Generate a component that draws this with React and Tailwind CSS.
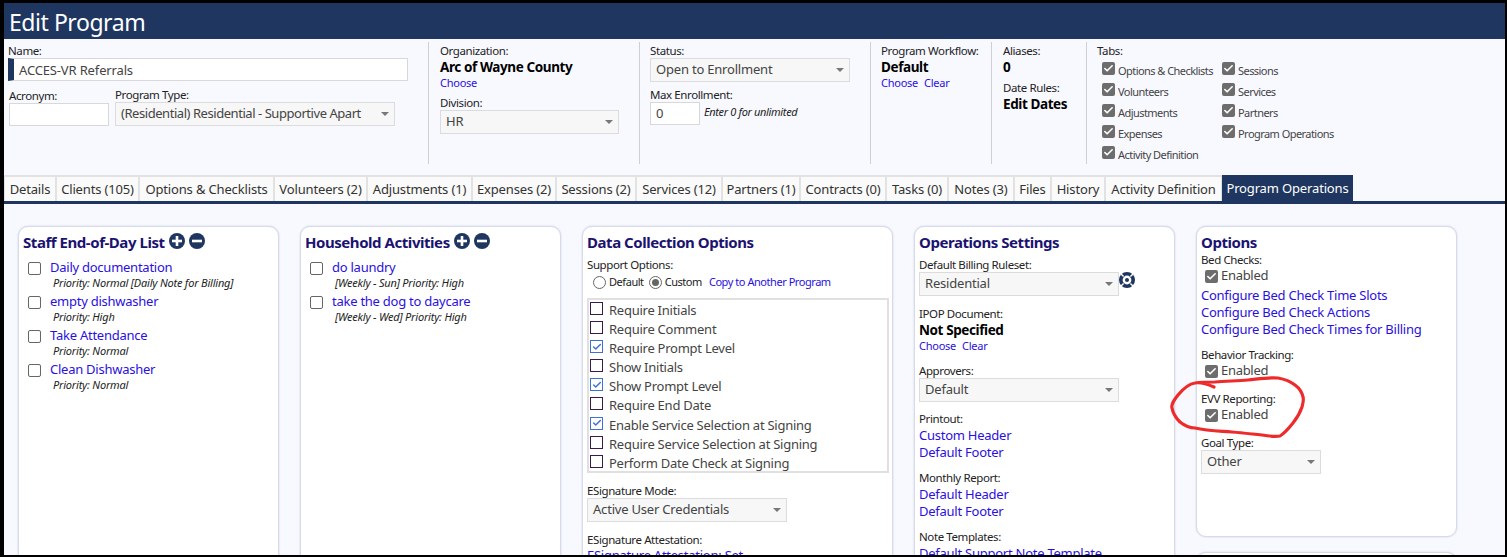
import { Check } from "lucide-react";

const tabs = [
  { label: "Details", width: "w-[52px]" },
  { label: "Clients (105)", width: "w-[83px]" },
  { label: "Options & Checklists", width: "w-[135px]" },
  { label: "Volunteers (2)", width: "w-[93px]" },
  { label: "Adjustments (1)", width: "w-[105px]" },
  { label: "Expenses (2)", width: "w-[84px]" },
  { label: "Sessions (2)", width: "w-[80px]" },
  { label: "Services (12)", width: "w-[86px]" },
  { label: "Partners (1)", width: "w-[78px]" },
  { label: "Contracts (0)", width: "w-[86px]" },
  { label: "Tasks (0)", width: "w-[62px]" },
  { label: "Notes (3)", width: "w-[66px]" },
  { label: "Files", width: "w-[37px]" },
  { label: "History", width: "w-[54px]" },
  { label: "Activity Definition", width: "w-[117px]" },
];

const tabOptions = [
  ["Options & Checklists", "Volunteers", "Adjustments", "Expenses", "Activity Definition"],
  ["Sessions", "Services", "Partners", "Program Operations"],
];

const staffList = [
  { name: "Daily documentation", note: "Priority: Normal [Daily Note for Billing]" },
  { name: "empty dishwasher", note: "Priority: High" },
  { name: "Take Attendance", note: "Priority: Normal" },
  { name: "Clean Dishwasher", note: "Priority: Normal" },
];

const household = [
  { name: "do laundry", note: "[Weekly - Sun] Priority: High" },
  { name: "take the dog to daycare", note: "[Weekly - Wed] Priority: High" },
];

const supportOptions = [
  { label: "Require Initials", on: false },
  { label: "Require Comment", on: false },
  { label: "Require Prompt Level", on: true },
  { label: "Show Initials", on: false },
  { label: "Show Prompt Level", on: true },
  { label: "Require End Date", on: false },
  { label: "Enable Service Selection at Signing", on: true },
  { label: "Require Service Selection at Signing", on: false },
  { label: "Perform Date Check at Signing", on: false },
];

function Label({ children, className = "" }) {
  return <div className={`text-[11.5px] leading-[14px] tracking-[-0.4px] whitespace-nowrap text-[#222] ${className}`}>{children}</div>;
}

function Bold({ children }) {
  return <div className="text-[13.5px] leading-[18px] font-bold tracking-[-0.4px] text-black">{children}</div>;
}

function Link({ children, className = "" }) {
  return <a className={`tracking-[-0.25px] whitespace-nowrap text-[#2a10e0] ${className}`}>{children}</a>;
}

function Select({ value, className = "" }) {
  return (
    <div className={`flex h-[24px] items-center justify-between border border-[#dcdcdc] bg-[#f7f7f7] pl-[5px] pr-[5px] text-[13px] tracking-[-0.2px] whitespace-nowrap text-[#444] ${className}`}>
      <span>{value}</span>
      <span className="ml-1 h-0 w-0 shrink-0 border-x-[4px] border-t-[4px] border-x-transparent border-t-[#777]" />
    </div>
  );
}

function GrayBox() {
  return (
    <span className="flex h-[13px] w-[13px] shrink-0 items-center justify-center rounded-[2px] bg-[#6d6d6d]">
      <Check size={11} strokeWidth={3.5} className="text-white" />
    </span>
  );
}

function Enabled() {
  return (
    <div className="flex h-[18px] items-center gap-[3px] pl-[4px] text-[13px] tracking-[-0.3px] text-[#444]">
      <GrayBox />
      <span>Enabled</span>
    </div>
  );
}

function RoundIcon({ minus }) {
  return (
    <svg width="16" height="16" viewBox="0 0 16 16" className="shrink-0">
      <circle cx="8" cy="8" r="8" fill="#1f3660" />
      <rect x="3" y="6.7" width="10" height="2.6" fill="#fff" />
      {!minus && <rect x="6.7" y="3" width="2.6" height="10" fill="#fff" />}
    </svg>
  );
}

function GearIcon() {
  return (
    <svg width="16" height="16" viewBox="0 0 16 16" className="shrink-0">
      <circle cx="8" cy="8" r="8" fill="#1f3660" />
      <circle cx="8" cy="8" r="4.4" fill="#fff" />
      <circle cx="8" cy="8" r="2" fill="#1f3660" />
      <path d="M2 2 L4.6 4.6 M14 2 L11.4 4.6 M2 14 L4.6 11.4 M14 14 L11.4 11.4" stroke="#fff" strokeWidth="1.4" />
    </svg>
  );
}

function Divider() {
  return <div className="w-[1px] shrink-0 self-stretch bg-[#cfcfcf]" />;
}

function Card({ className = "", children }) {
  return (
    <div className={`shrink-0 overflow-hidden rounded-[10px] border border-[#d6daea] bg-white px-[4px] shadow-[0_0_2px_rgba(80,90,140,0.25)] ${className}`}>
      {children}
    </div>
  );
}

function CardTitle({ children, icons }) {
  return (
    <div className="flex items-start gap-[4px] pt-[6px]">
      <h3 className="text-[15px] leading-[19px] font-bold tracking-[-0.45px] text-[#1b1370]">{children}</h3>
      {icons && (
        <div className="flex gap-[4px]">
          <RoundIcon />
          <RoundIcon minus />
        </div>
      )}
    </div>
  );
}

function CheckList({ items }) {
  return (
    <div className="mt-[8px] flex flex-col">
      {items.map((item) => (
        <div key={item.name} className="flex h-[34px] pl-[5px]">
          <span className="mt-[2px] h-[13px] w-[13px] shrink-0 rounded-[2px] border border-[#666] bg-white" />
          <div className="ml-[9px]">
            <Link className="block text-[13px] leading-[15px]">{item.name}</Link>
            <div className="mt-[1px] pl-[3px] text-[11px] leading-[14px] tracking-[-0.2px] whitespace-nowrap text-[#222] italic">{item.note}</div>
          </div>
        </div>
      ))}
    </div>
  );
}

export default function App() {
  return (
    <div className="h-[557px] w-[1507px] overflow-hidden border-t-[3px] border-r-[2px] border-b-[2px] border-l-[4px] border-black bg-[#f8f9ff] font-['Noto_Sans',sans-serif] text-[#222]">
      <div className="relative h-full">
        <div className="flex h-[36px] items-center bg-[#1f3660] pt-[3px] pl-[5px]">
          <h1 className="text-[23px] tracking-[-0.45px] text-white">Edit Program</h1>
        </div>

        {/* Program header fields */}
        <div className="flex h-[136px] pt-[3px] pb-[11px]">
          <div className="w-[424px] shrink-0 pl-[4px]">
            <Label className="mt-[2px]">Name:</Label>
            <div className="flex h-[23px] w-[400px] items-center border border-[#d8d8d8] border-l-[6px] border-l-[#1f3660] bg-white pt-[2px] pl-[5px] text-[13px] tracking-[-0.15px] text-[#444]">
              ACCES-VR Referrals
            </div>
            <div className="mt-[7px] flex gap-[6px]">
              <div className="pl-[1px]">
                <Label className="mt-[1px]">Acronym:</Label>
                <div className="h-[23px] w-[100px] border border-[#d8d8d8] bg-white" />
              </div>
              <div>
                <Label>Program Type:</Label>
                <Select value="(Residential) Residential - Supportive Apart" className="w-[280px] tracking-[-0.45px]" />
              </div>
            </div>
          </div>
          <Divider />
          <div className="w-[210px] shrink-0 pl-[11px]">
            <Label className="mt-[2px]">Organization:</Label>
            <Bold>Arc of Wayne County</Bold>
            <Link className="block text-[11px] leading-[14px]">Choose</Link>
            <Label className="mt-[6px]">Division:</Label>
            <Select value="HR" className="w-[179px]" />
          </div>
          <Divider />
          <div className="w-[230px] shrink-0 pl-[10px]">
            <Label className="mt-[2px]">Status:</Label>
            <Select value="Open to Enrollment" className="w-[200px]" />
            <Label className="mt-[6px]">Max Enrollment:</Label>
            <div className="flex items-start gap-[4px]">
              <div className="flex h-[23px] w-[50px] items-center border border-[#d8d8d8] bg-white pl-[5px] text-[13px] text-[#444]">0</div>
              <div className="text-[11px] leading-[20px] tracking-[-0.35px] whitespace-nowrap text-[#222] italic">Enter 0 for unlimited</div>
            </div>
          </div>
          <Divider />
          <div className="w-[120px] shrink-0 pl-[10px]">
            <Label className="mt-[2px]">Program Workflow:</Label>
            <Bold>Default</Bold>
            <div className="flex gap-[6px] text-[11px] leading-[14px]">
              <Link>Choose</Link>
              <Link>Clear</Link>
            </div>
          </div>
          <Divider />
          <div className="w-[94px] shrink-0 pl-[11px]">
            <Label className="mt-[2px]">Aliases:</Label>
            <Bold>0</Bold>
            <Label className="mt-[5px]">Date Rules:</Label>
            <Bold>Edit Dates</Bold>
          </div>
          <Divider />
          <div className="pl-[10px]">
            <Label className="mt-[2px]">Tabs:</Label>
            <div className="flex gap-[6px] pl-[5px] text-[11px] leading-[16px] tracking-[-0.55px] whitespace-nowrap text-[#444]">
              {tabOptions.map((col, i) => (
                <div key={i} className={`flex flex-col ${i === 0 ? "w-[114px]" : ""}`}>
                  {col.map((t) => (
                    <div key={t} className="flex h-[21px] items-start gap-[3px] pt-[4px]">
                      <GrayBox />
                      <span className="mt-[1px]">{t}</span>
                    </div>
                  ))}
                </div>
              ))}
            </div>
          </div>
        </div>

        {/* Tab strip */}
        <div className="flex h-[26px]">
          {tabs.map((t) => (
            <div key={t.label} className={`flex items-center justify-center border-x border-t-2 border-[#e2e2e2] bg-[#fafafa] pt-[1px] text-[13px] tracking-[-0.15px] whitespace-nowrap text-[#333] ${t.width}`}>
              {t.label}
            </div>
          ))}
          <div className="flex w-[131px] items-center justify-center bg-[#1f3660] pt-[1px] text-[13px] tracking-[-0.15px] whitespace-nowrap text-white">Program Operations</div>
        </div>
        <div className="h-[3px] bg-[#1f3660]" />

        {/* Cards */}
        <div className="flex items-start gap-[21px] pt-[22px] pl-[14px]">
          <Card className="h-[340px] w-[261px]">
            <CardTitle icons>Staff End-of-Day List</CardTitle>
            <CheckList items={staffList} />
          </Card>
          <Card className="h-[340px] w-[261px]">
            <CardTitle icons>Household Activities</CardTitle>
            <CheckList items={household} />
          </Card>
          <Card className="h-[340px] w-[311px]">
            <CardTitle>Data Collection Options</CardTitle>
            <Label className="mt-[6px]">Support Options:</Label>
            <div className="mt-[2px] flex items-center pl-[6px] text-[11px] leading-[16px] tracking-[-0.45px]">
              <span className="h-[13px] w-[13px] rounded-full border border-[#666] bg-white" />
              <span className="ml-[3px]">Default</span>
              <span className="ml-[5px] flex h-[13px] w-[13px] items-center justify-center rounded-full border border-[#666] bg-white">
                <span className="h-[7px] w-[7px] rounded-full bg-[#666]" />
              </span>
              <span className="ml-[3px]">Custom</span>
              <Link className="ml-[7px] tracking-[-0.45px]">Copy to Another Program</Link>
            </div>
            <div className="mt-[8px] h-[175px] w-[302px] overflow-hidden border-2 border-[#e0e0e0] pt-[2px] pl-[1px] text-[13px] tracking-[-0.25px] text-[#444]">
              {supportOptions.map((o) => (
                <div key={o.label} className="flex h-[19.1px] items-start">
                  <span className={`flex h-[13px] w-[13px] shrink-0 items-center justify-center border ${o.on ? "border-[#3f6fd8]" : "border-[#3a1a4a]"}`}>
                    {o.on && <Check size={10} strokeWidth={3.5} className="text-[#3f6fd8]" />}
                  </span>
                  <span className="ml-[6px] leading-[17px] whitespace-nowrap">{o.label}</span>
                </div>
              ))}
            </div>
            <Label className="mt-[11px]">ESignature Mode:</Label>
            <Select value="Active User Credentials" className="w-[200px]" />
            <Label className="mt-[11px]">ESignature Attestation:</Label>
            <Link className="block text-[13px] leading-[17px]">ESignature Attestation: Set</Link>
          </Card>
          <Card className="h-[340px] w-[261px]">
            <CardTitle>Operations Settings</CardTitle>
            <Label className="mt-[6px]">Default Billing Ruleset:</Label>
            <div className="flex items-start">
              <Select value="Residential" className="w-[200px]" />
              <GearIcon />
            </div>
            <Label className="mt-[11px]">IPOP Document:</Label>
            <Bold>Not Specified</Bold>
            <div className="flex gap-[6px] text-[11px] leading-[14px]">
              <Link>Choose</Link>
              <Link>Clear</Link>
            </div>
            <Label className="mt-[11px]">Approvers:</Label>
            <Select value="Default" className="w-[200px]" />
            <Label className="mt-[10px]">Printout:</Label>
            <Link className="mt-[1px] block text-[13px] leading-[17px]">Custom Header</Link>
            <Link className="block text-[13px] leading-[17px]">Default Footer</Link>
            <Label className="mt-[10px]">Monthly Report:</Label>
            <Link className="mt-[1px] block text-[13px] leading-[17px]">Default Header</Link>
            <Link className="block text-[13px] leading-[17px]">Default Footer</Link>
            <Label className="mt-[10px]">Note Templates:</Label>
            <Link className="mt-[1px] block text-[13px] leading-[17px]">Default Support Note Template</Link>
          </Card>
          <div className="flex w-[261px] shrink-0 flex-col gap-[15px]">
            <Card className="h-[311px]">
              <CardTitle>Options</CardTitle>
              <Label className="mt-[1px]">Bed Checks:</Label>
              <Enabled />
              <div className="mt-[2px] flex flex-col text-[13px] leading-[17px]">
                <Link>Configure Bed Check Time Slots</Link>
                <Link>Configure Bed Check Actions</Link>
                <Link>Configure Bed Check Times for Billing</Link>
              </div>
              <Label className="mt-[10px]">Behavior Tracking:</Label>
              <Enabled />
              <Label className="mt-[12px]">EVV Reporting:</Label>
              <Enabled />
              <Label className="mt-[12px]">Goal Type:</Label>
              <Select value="Other" className="w-[120px]" />
            </Card>
            <Card className="h-[40px]" />
          </div>
        </div>

        {/* Red marker circle drawn over the screenshot */}
        <svg className="pointer-events-none absolute top-[-3px] left-[-4px]" width="1507" height="557" fill="none">
          <path
            d="M1214 387 C1207 384 1200 382 1195 383 C1188 384 1183 389 1178 395 C1174 400 1171 404 1172 408 C1173 414 1176 418 1180 422 C1185 426 1190 428 1195 428 C1208 431 1220 431 1232 432 C1243 433 1252 434 1262 435 C1268 436 1275 437 1280 436 C1285 433 1289 428 1293 423 C1297 418 1300 413 1302 407 C1303 403 1304 400 1303 397 C1302 392 1299 388 1295 385 C1290 381 1284 379 1278 378 C1268 377 1258 379 1248 380 C1237 381 1226 381 1215 382 C1208 382 1202 382 1195 383"
            stroke="#ee2b2b"
            strokeWidth="3.2"
            strokeLinecap="round"
          />
        </svg>
      </div>
    </div>
  );
}
